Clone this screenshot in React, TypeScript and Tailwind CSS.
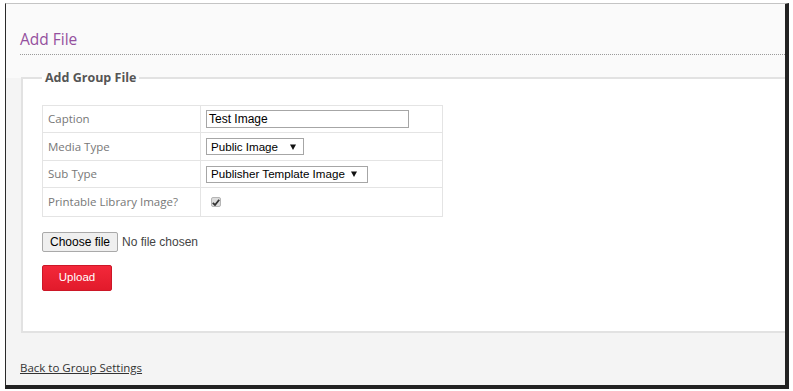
import React from "react";

function FakeSelect({ label, w, pr }: { label: string; w: string; pr: string }) {
  return (
    <div
      className={`${w} ${pr} h-[17px] border border-[#a6a6a6] bg-white flex items-center justify-between pl-[4px] text-[11.6px] leading-none text-black`}
      style={{ fontFamily: "'Liberation Sans', Arial, sans-serif" }}
    >
      <span className="whitespace-nowrap">{label}</span>
      <svg width="6" height="6" viewBox="0 0 6 6" className="shrink-0">
        <path d="M0 0.5 L6 0.5 L3 6 Z" fill="#111" />
      </svg>
    </div>
  );
}

export default function App() {
  const sans = { fontFamily: "'Open Sans', 'Noto Sans', sans-serif" };
  const arial = { fontFamily: "'Liberation Sans', Arial, sans-serif" };
  const rows: { label: string; h: string; value: React.ReactNode }[] = [
    {
      label: "Caption",
      h: "h-[27px]",
      value: (
        <div
          className="w-[203px] h-[18px] border border-[#a6a6a6] bg-white flex items-center pl-[2px] text-[12px] leading-none text-black"
          style={arial}
        >
          Test Image
        </div>
      ),
    },
    { label: "Media Type", h: "h-[28px]", value: <FakeSelect label="Public Image" w="w-[98px]" pr="pr-[7px]" /> },
    { label: "Sub Type", h: "h-[27px]", value: <FakeSelect label="Publisher Template Image" w="w-[162px]" pr="pr-[10px]" /> },
    {
      label: "Printable Library Image?",
      h: "h-[29px]",
      value: (
        <div className="ml-[5px] w-[10px] h-[10px] rounded-[2px] border border-[#b5b5b5] bg-[#dcdcdc] flex items-center justify-center">
          <svg width="8" height="7" viewBox="0 0 8 7">
            <path d="M0.8 3.8 L3 6 L7.2 0.8" stroke="#333" strokeWidth="1.8" fill="none" />
          </svg>
        </div>
      ),
    },
  ];

  return (
    <div className="w-[793px] h-[391px] bg-white overflow-hidden" style={sans}>
      <div className="ml-[5px] mt-[3px] w-[784px] h-[386px] border-l border-l-[#2a2a2a] border-t border-t-[#c4c4c4] border-r-4 border-r-[#222] border-b-4 border-b-[#222] bg-[#f4f4f4] flex flex-col overflow-hidden">
        <div className="h-[74px] bg-[#fafafa] pt-[24px] pl-[14px] shrink-0">
          <div className="border-b border-dotted border-[#9a9a9a] pb-[4px]">
            <h1 className="text-[15.5px] leading-[22px] text-[#94509e] font-normal">Add File</h1>
          </div>
        </div>
        <div className="pl-[15px]">
          <fieldset className="-mt-[9px] border-2 border-r-0 border-[#e2e2e2] bg-white pl-[19px] pb-[40px] min-w-0">
            <legend className="px-[3px] text-[12.5px] leading-[18px] font-bold text-[#555]">Add Group File</legend>
            <div className="mt-[18px] w-[401px] border-t border-l border-[#e4e4e4]">
              {rows.map((r) => (
                <div key={r.label} className={`flex ${r.h}`}>
                  <div className="w-[158px] border-r border-b border-[#e4e4e4] flex items-center pl-[5px] text-[11.5px] text-[#777]">
                    {r.label}
                  </div>
                  <div className="flex-1 border-r border-b border-[#e4e4e4] flex items-center pl-[5px]">{r.value}</div>
                </div>
              ))}
            </div>
            <div className="mt-[15px] flex items-center" style={arial}>
              <div className="w-[76px] h-[20px] border border-[#a9a9a9] rounded-[2px] bg-[#efefef] flex items-center justify-center text-[12px] text-black">
                Choose file
              </div>
              <span className="ml-[4px] text-[12px] text-[#444]">No file chosen</span>
            </div>
            <div
              className="mt-[13px] w-[70px] h-[26px] rounded-[2px] border border-[#cc1727] bg-gradient-to-b from-[#f3283a] to-[#e21a2b] flex items-center justify-center text-[11.5px] text-white"
              style={arial}
            >
              Upload
            </div>
          </fieldset>
        </div>
        <div className="pl-[14px] mt-[27px] text-[11.5px] leading-[16px]">
          <a className="text-[#333] underline">Back to Group Settings</a>
        </div>
      </div>
    </div>
  );
}
